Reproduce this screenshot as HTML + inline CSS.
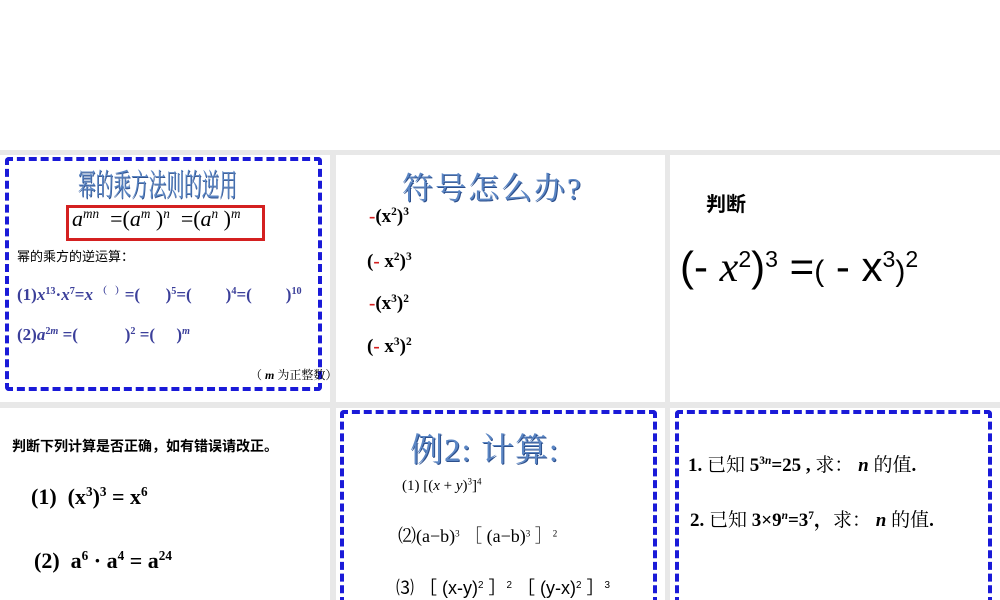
<!DOCTYPE html>
<html><head><meta charset="utf-8"><style>
html,body{margin:0;width:1000px;height:600px;overflow:hidden}
body{background:#fff;position:relative;font-family:"Liberation Serif","Noto Serif CJK SC",serif}
.g{position:absolute;background:#e8e8e8}
.a{position:absolute;white-space:nowrap}
.d{position:absolute;border:4px dashed #1a1ad8;box-sizing:border-box;border-radius:4px}
.clip{position:absolute;left:0;top:408px;width:1000px;height:192px;overflow:hidden}
.title{font-family:"Liberation Serif","Noto Serif CJK SC",serif;color:#5b86c4;text-shadow:1px 1px 0 #2c4f8c}
.sans{font-family:"Liberation Sans","Noto Sans CJK SC",sans-serif}
sup{font-size:60%;vertical-align:0.6em;line-height:0}
.p{color:#3b3f9a;font-weight:bold}
</style></head><body>
<div class="g" style="left:0;top:150px;width:1000px;height:5px"></div>
<div class="g" style="left:0;top:402px;width:1000px;height:6px"></div>
<div class="g" style="left:330px;top:150px;width:6px;height:450px"></div>
<div class="g" style="left:665px;top:150px;width:5px;height:450px"></div>

<!-- panel 1 -->
<div class="d" style="left:5px;top:157px;width:317px;height:234px"></div>
<div class="a title" style="left:78px;top:160px;font-size:31px;transform:scaleX(0.57);transform-origin:left">幂的乘方法则的逆用</div>
<div class="a" style="left:66px;top:205px;width:199px;height:36px;border:3px solid #d42020;box-sizing:border-box"></div>
<div class="a" style="left:72px;top:206px;font-size:22px;font-family:'Liberation Serif',serif"><i>a</i><sup><i>mn</i></sup>&nbsp; =(<i>a</i><sup><i>m</i></sup> )<sup><i>n</i></sup>&nbsp; =(<i>a</i><sup><i>n</i></sup> )<sup><i>m</i></sup></div>
<div class="a sans" style="left:17px;top:246px;font-size:13px">幂的乘方的逆运算：</div>
<div class="a p" style="left:17px;top:282px;font-size:17px">(1)<i>x</i><sup>13</sup>·<i>x</i><sup>7</sup>=<i>x</i> <span style="font-size:10px;vertical-align:6px">（&nbsp;&nbsp;&nbsp;）</span>=(&nbsp;&nbsp;&nbsp;&nbsp;&nbsp;&nbsp;)<sup>5</sup>=(&nbsp;&nbsp;&nbsp;&nbsp;&nbsp;&nbsp;&nbsp;&nbsp;)<sup>4</sup>=(&nbsp;&nbsp;&nbsp;&nbsp;&nbsp;&nbsp;&nbsp;&nbsp;)<sup>10</sup></div>
<div class="a p" style="left:17px;top:325px;font-size:17px">(2)<i>a</i><sup>2<i>m</i></sup> =(&nbsp;&nbsp;&nbsp;&nbsp;&nbsp;&nbsp;&nbsp;&nbsp;&nbsp;&nbsp;&nbsp;)<sup>2</sup> =(&nbsp;&nbsp;&nbsp;&nbsp;&nbsp;)<sup><i>m</i></sup></div>
<div class="a" style="left:250px;top:366px;font-size:12px">（ <b><i>m</i></b> 为正整数）</div>

<!-- panel 2 -->
<div class="a title" style="left:402px;top:163px;font-size:31px;letter-spacing:2px">符号怎么办?</div>
<div class="a" style="left:369px;top:206px;font-size:19px;font-weight:bold"><span style="color:#d42020">-</span>(x<sup>2</sup>)<sup>3</sup></div>
<div class="a" style="left:367px;top:251px;font-size:19px;font-weight:bold">(<span style="color:#d42020">-</span> x<sup>2</sup>)<sup>3</sup></div>
<div class="a" style="left:369px;top:293px;font-size:19px;font-weight:bold"><span style="color:#d42020">-</span>(x<sup>3</sup>)<sup>2</sup></div>
<div class="a" style="left:367px;top:336px;font-size:19px;font-weight:bold">(<span style="color:#d42020">-</span> x<sup>3</sup>)<sup>2</sup></div>

<!-- panel 3 -->
<div class="a sans" style="left:706px;top:188px;font-size:20px;font-weight:bold">判断</div>
<div class="a sans" style="left:680px;top:242px;font-size:42px;line-height:50px">(- <i style="font-family:'Liberation Serif',serif">x</i><sup style="font-size:55%">2</sup>)<sup style="font-size:55%">3</sup> =<span style="font-size:30px">(</span> - x<sup style="font-size:55%">3</sup><span style="font-size:30px">)</span><sup style="font-size:55%">2</sup></div>

<!-- panel 4 -->
<div class="a sans" style="left:12px;top:436px;font-size:14px;font-weight:bold">判断下列计算是否正确，如有错误请改正。</div>
<div class="a" style="left:31px;top:484px;font-size:22px;font-weight:bold">(1)&nbsp; (x<sup>3</sup>)<sup>3</sup> = x<sup>6</sup></div>
<div class="a" style="left:34px;top:548px;font-size:22px;font-weight:bold">(2)&nbsp; a<sup>6</sup> · a<sup>4</sup> = a<sup>24</sup></div>

<div class="clip">
<div class="d" style="left:340px;top:2px;width:317px;height:230px"></div>
<div class="d" style="left:675px;top:2px;width:317px;height:230px"></div>
</div>

<!-- panel 5 -->
<div class="a title" style="left:410px;top:424px;font-size:33px;letter-spacing:1px">例2: 计算:</div>
<div class="a" style="left:402px;top:478px;font-size:15px">(1) [(<i>x</i> + <i>y</i>)<sup>3</sup>]<sup>4</sup></div>
<div class="a" style="left:398px;top:522px;font-size:18px">⑵(a−b)<sup style="font-size:50%">3</sup> ［ (a−b)<sup style="font-size:50%">3</sup> ］<sup style="font-size:50%">2</sup></div>
<div class="a sans" style="left:396px;top:574px;font-size:18px">⑶ ［ (x-y)<sup style="font-size:55%">2</sup> ］<sup style="font-size:55%">2</sup> ［ (y-x)<sup style="font-size:55%">2</sup> ］<sup style="font-size:55%">3</sup></div>

<!-- panel 6 -->
<div class="a" style="left:688px;top:450px;font-size:19px;font-weight:bold">1. <span style="font-weight:normal">已知</span> 5<sup>3<i>n</i></sup>=25 , <span style="font-weight:normal">求：</span> <i>n</i> <span style="font-weight:normal">的值</span>.</div>
<div class="a" style="left:690px;top:505px;font-size:19px;font-weight:bold">2. <span style="font-weight:normal">已知</span> 3×9<sup><i>n</i></sup>=3<sup>7</sup>，<span style="font-weight:normal">求：</span> <i>n</i> <span style="font-weight:normal">的值</span>.</div>
</body></html>
